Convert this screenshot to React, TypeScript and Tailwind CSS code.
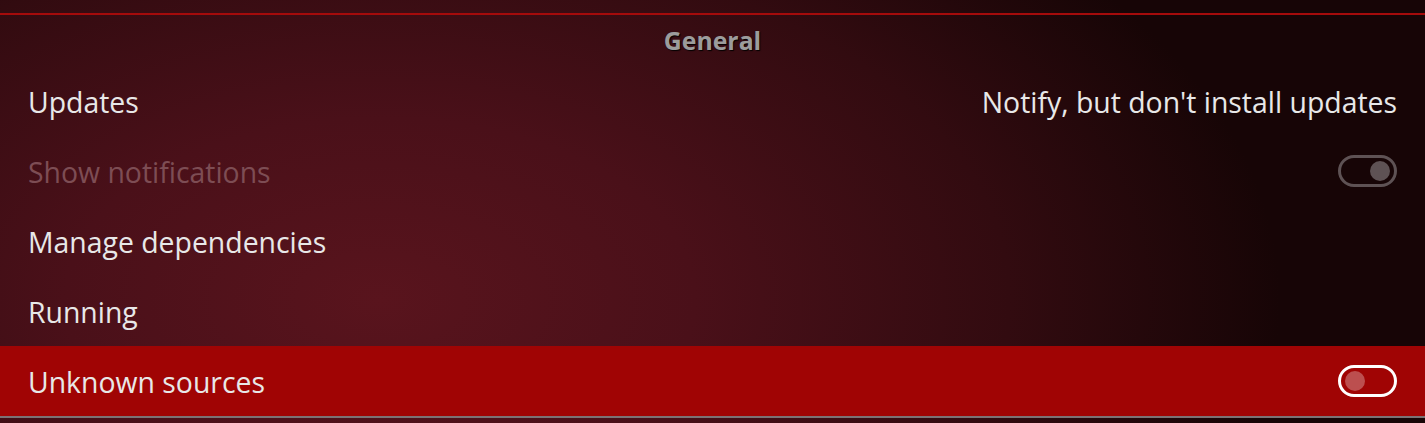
const rows = [
  { label: 'Updates', value: "Notify, but don't install updates" },
  { label: 'Show notifications', toggle: 'on', disabled: true },
  { label: 'Manage dependencies' },
  { label: 'Running' },
  { label: 'Unknown sources', toggle: 'off', focused: true },
]

const Toggle = ({ on, focused }: { on: boolean; focused?: boolean }) => (
  <div
    className={
      'w-[59px] h-[32px] rounded-full border-[3px] flex items-center px-[4px] ' +
      (focused ? 'border-white' : 'border-[#5e5254]') +
      (on ? ' justify-end' : ' justify-start')
    }
  >
    <div className={'w-[20px] h-[20px] rounded-full ' + (focused ? 'bg-white/30' : 'bg-[#5e5254]')} />
  </div>
)

export default function App() {
  return (
    <div
      className="w-[1425px] h-[423px] overflow-hidden flex flex-col"
      style={{
        fontFamily: '"Open Sans", "Noto Sans", sans-serif',
        background:
          'radial-gradient(ellipse 900px 520px at 380px 300px, #59141d 0%, #4a1019 35%, #320b10 70%, #170506 100%)',
      }}
    >
      <div className="h-[13px]" />
      <div className="h-[2px] bg-[#a50b0b]" />
      <div className="h-[51px] flex items-center justify-center">
        <span className="text-[24.8px] font-bold text-[#9c9c9c] [text-shadow:1px_1px_1px_rgba(0,0,0,0.95)] mt-[1px]">
          General
        </span>
      </div>
      {rows.map((r) => (
        <div
          key={r.label}
          className={
            'h-[70px] flex items-center justify-between pl-[28px] pr-[28px] ' +
            (r.focused ? 'bg-[#a00404]' : '')
          }
        >
          <span
            className={
              'text-[28.4px] leading-none font-normal mt-[2px] ' + (r.disabled ? 'text-[#7d4d54]' : 'text-[#e8e8e8]')
            }
          >
            {r.label}
          </span>
          {r.value && <span className="text-[28.4px] leading-none font-normal mt-[2px] text-[#e8e8e8]">{r.value}</span>}
          {r.toggle && <Toggle on={r.toggle === 'on'} focused={r.focused} />}
        </div>
      ))}
      <div className="h-[2px] bg-[#7c7274]" />
      <div className="flex-1" />
    </div>
  )
}
